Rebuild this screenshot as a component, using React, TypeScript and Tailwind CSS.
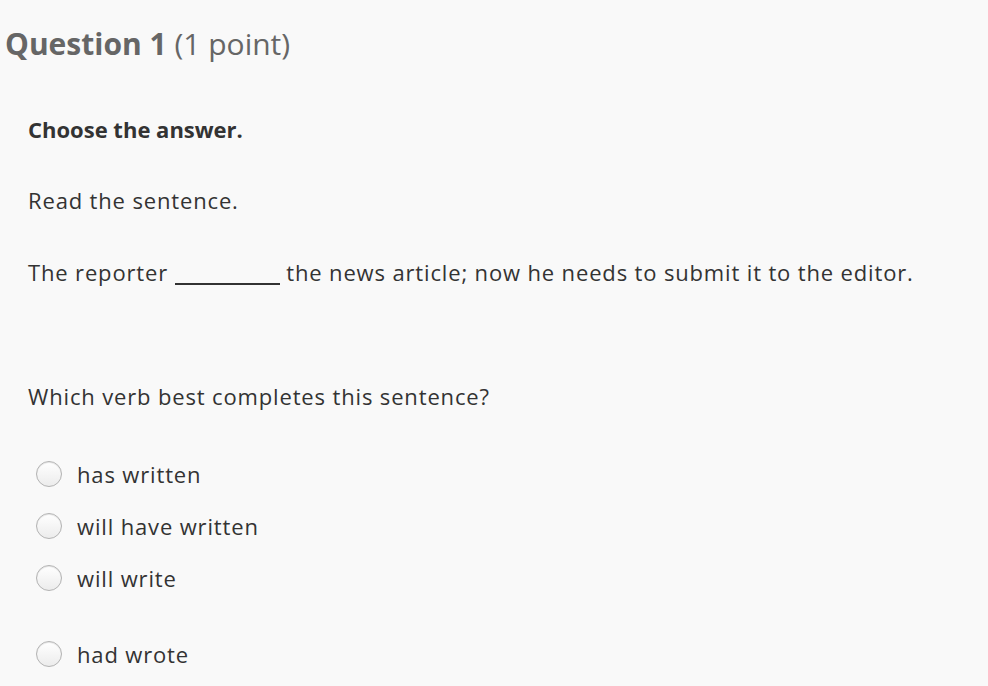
import React from 'react';

const OPTIONS = [
    { label: 'has written', gap: false },
    { label: 'will have written', gap: false },
    { label: 'will write', gap: false },
    { label: 'had wrote', gap: true },
];

const Radio = () => (
    <span className="inline-block w-[26px] h-[26px] rounded-full border border-[#b3b3b3] bg-gradient-to-b from-white to-[#ececec] shadow-[inset_0_1px_1px_rgba(0,0,0,0.1)] shrink-0" />
);

export default function App() {
    return (
        <div className="w-[988px] h-[686px] overflow-hidden bg-[#f9f9f9] text-[#333] font-['Open_Sans','Liberation_Sans',sans-serif]">
            {/* Heading */}
            <h1 className="pl-[5px] pt-[24px] text-[30px] leading-[40px] text-[#666]">
                <span className="font-bold">Question 1</span> <span className="font-normal">(1 point)</span>
            </h1>

            <div className="pl-[28px] text-[22px] leading-[30px] tracking-[0.85px]">
                <p className="mt-[50px] font-bold tracking-normal">Choose the answer.</p>
                <p className="mt-[41px]">Read the sentence.</p>
                <p className="mt-[42px]">
                    The reporter <span className="inline-block w-[105px] border-b-2 border-[#333] translate-y-[4px]" /> the news article; now he needs to submit it to the editor.
                </p>
                <p className="mt-[94px]">Which verb best completes this sentence?</p>

                <div className="mt-[48px] pl-[8px] flex flex-col">
                    {OPTIONS.map((opt, i) => (
                        <label
                            key={opt.label}
                            className={
                                'flex items-center gap-[15px] h-[30px] ' +
                                (i === 0 ? '' : opt.gap ? 'mt-[46px]' : 'mt-[22px]')
                            }
                        >
                            <Radio />
                            <span>{opt.label}</span>
                        </label>
                    ))}
                </div>
            </div>
        </div>
    );
}
